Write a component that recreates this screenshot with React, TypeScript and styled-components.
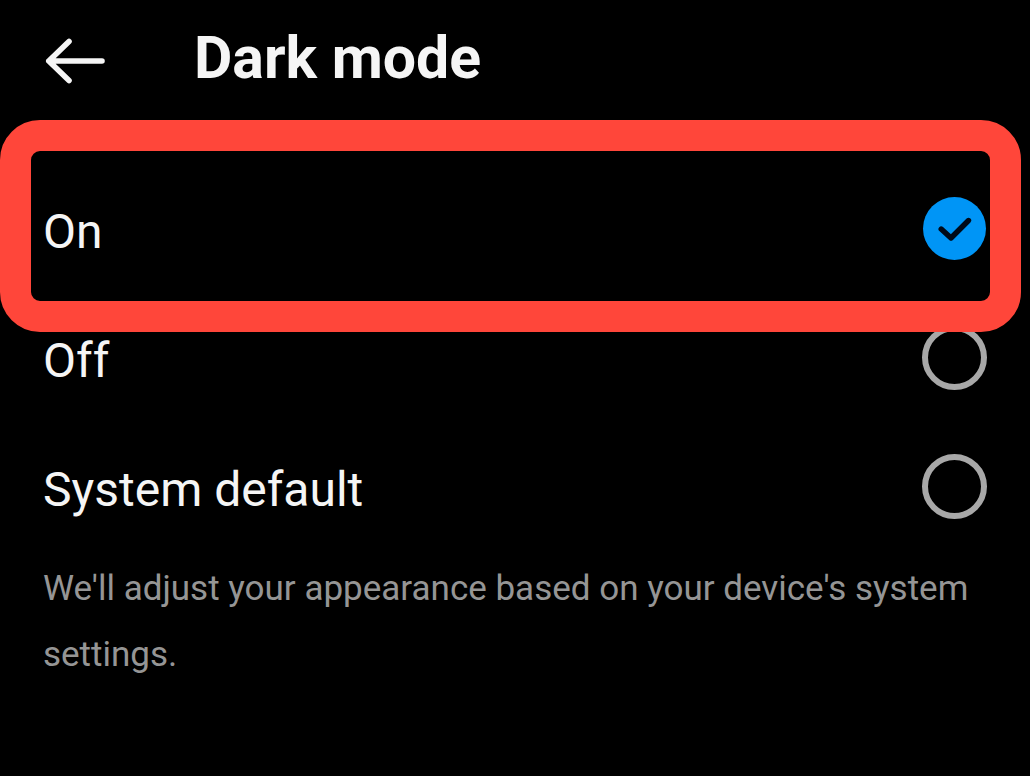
import React, { useState } from "react";
import styled, { createGlobalStyle } from "styled-components";

const GlobalStyle = createGlobalStyle`
  * { box-sizing: border-box; }
  body {
    margin: 0;
    background: #000;
    color: #f5f5f5;
    font-family: Roboto, "Liberation Sans", sans-serif;
  }
`;

const Screen = styled.main`
  min-height: 100vh;
  background: #000;
`;

const Header = styled.header`
  display: flex;
  align-items: center;
  gap: 88px;
  height: 120px;
  padding: 0 44px 4px;
`;

const BackButton = styled.button`
  display: flex;
  padding: 6px 0 0;
  border: 0;
  background: none;
  color: inherit;
  cursor: pointer;
`;

const Title = styled.h1`
  margin: 0;
  font-size: 59px;
  line-height: 72px;
  font-weight: 700;
`;

const Options = styled.fieldset`
  margin: 0;
  padding: 44px 0 0;
  border: 0;
  min-width: 0;
`;

const Option = styled.label<{ $highlighted?: boolean }>`
  position: relative;
  display: flex;
  align-items: center;
  justify-content: space-between;
  height: 129px;
  padding: 0 43px;
  font-size: 48px;
  line-height: 56px;
  cursor: pointer;

  &::after {
    content: "";
    display: ${(p) => (p.$highlighted ? "block" : "none")};
    position: absolute;
    z-index: 1;
    inset: -44px 9px -39px 0;
    border: 31px solid #ff463a;
    border-radius: 40px;
    pointer-events: none;
  }
`;

const OptionText = styled.span`
  padding-top: 6px;
`;

const RadioBox = styled.span`
  display: grid;
  place-items: center;
  width: 65px;
  height: 65px;
`;

const Radio = styled.input`
  grid-area: 1 / 1;
  appearance: none;
  width: 65px;
  height: 65px;
  margin: 0;
  border: 6px solid #a8a8a8;
  border-radius: 50%;

  &:checked {
    width: 63px;
    height: 63px;
    border: 0;
    background: #0095f6;
  }
`;

const CheckMark = styled.svg`
  grid-area: 1 / 1;
  pointer-events: none;
`;

const Hint = styled.p`
  margin: 0;
  padding: 5px 43px 0;
  color: #959595;
  font-size: 35px;
  line-height: 66px;
`;

const modes = [
  { value: "on", label: "On" },
  { value: "off", label: "Off" },
  { value: "system", label: "System default" },
];

export default function App() {
  const [mode, setMode] = useState("on");

  return (
    <>
      <GlobalStyle />
      <Screen>
        <Header>
          <BackButton type="button" aria-label="Back">
            <svg width="62" height="50" viewBox="0 0 62 50" fill="none" stroke="currentColor" strokeWidth="5.6" strokeLinecap="round" strokeLinejoin="round" aria-hidden="true">
              <path d="M25 5.5 4.8 25 25 44.5M4.8 25H58" />
            </svg>
          </BackButton>
          <Title>Dark mode</Title>
        </Header>
        <Options aria-label="Dark mode">
          {modes.map(({ value, label }) => (
            <Option key={value} $highlighted={value === "on"}>
              <OptionText>{label}</OptionText>
              <RadioBox>
                <Radio
                  type="radio"
                  name="mode"
                  value={value}
                  checked={mode === value}
                  onChange={() => setMode(value)}
                />
                {mode === value && (
                  <CheckMark width="36" height="28" viewBox="0 0 36 28" fill="none" stroke="#000a18" strokeWidth="5.4" strokeLinecap="round" strokeLinejoin="round" aria-hidden="true">
                    <path d="M4.2 14 14 23 31.5 5.5" />
                  </CheckMark>
                )}
              </RadioBox>
            </Option>
          ))}
        </Options>
        <Hint>We'll adjust your appearance based on your device's system settings.</Hint>
      </Screen>
    </>
  );
}
